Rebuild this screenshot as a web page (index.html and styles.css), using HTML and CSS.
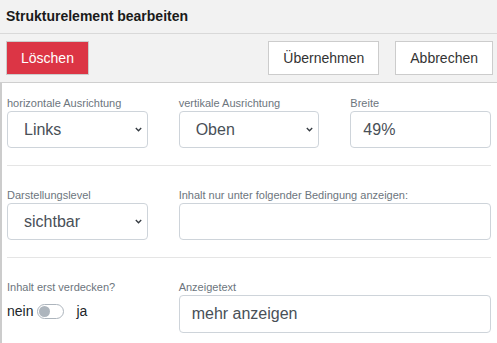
FILE: index.html
```html
<!DOCTYPE html>
<html lang="de">

<head>
    <meta charset="UTF-8">
    <title>Strukturelement bearbeiten</title>
    <link rel="stylesheet" href="styles.css">
</head>

<body>
    <div class="dialog">
        <div class="dialog-title">Strukturelement bearbeiten</div>

        <div class="toolbar">
            <button class="btn btn-danger">Löschen</button>
            <span class="spacer"></span>
            <button class="btn">Übernehmen</button>
            <button class="btn">Abbrechen</button>
        </div>

        <form class="content">
            <div class="row">
                <div class="field">
                    <label for="hAlign">horizontale Ausrichtung</label>
                    <div class="select-wrap">
                        <select id="hAlign" class="control">
                            <option>Links</option>
                            <option>Mitte</option>
                            <option>Rechts</option>
                        </select>
                        <svg class="chevron" width="7" height="5" viewBox="0 0 7 5"><polyline points="0.8,1 3.5,3.8 6.2,1" fill="none" stroke="#343a40" stroke-width="1.3"/></svg>
                    </div>
                </div>
                <div class="field">
                    <label for="vAlign">vertikale Ausrichtung</label>
                    <div class="select-wrap">
                        <select id="vAlign" class="control">
                            <option>Oben</option>
                            <option>Mitte</option>
                            <option>Unten</option>
                        </select>
                        <svg class="chevron" width="7" height="5" viewBox="0 0 7 5"><polyline points="0.8,1 3.5,3.8 6.2,1" fill="none" stroke="#343a40" stroke-width="1.3"/></svg>
                    </div>
                </div>
                <div class="field">
                    <label for="width">Breite</label>
                    <input type="text" id="width" class="control" value="49%">
                </div>
            </div>

            <hr>

            <div class="row">
                <div class="field">
                    <label for="level">Darstellungslevel</label>
                    <div class="select-wrap">
                        <select id="level" class="control">
                            <option>sichtbar</option>
                            <option>versteckt</option>
                        </select>
                        <svg class="chevron" width="7" height="5" viewBox="0 0 7 5"><polyline points="0.8,1 3.5,3.8 6.2,1" fill="none" stroke="#343a40" stroke-width="1.3"/></svg>
                    </div>
                </div>
                <div class="field span-2">
                    <label for="condition">Inhalt nur unter folgender Bedingung anzeigen:</label>
                    <input type="text" id="condition" class="control">
                </div>
            </div>

            <hr>

            <div class="row">
                <div class="field">
                    <label>Inhalt erst verdecken?</label>
                    <div class="switch-line">
                        <span>nein</span>
                        <span class="switch"><span class="knob"></span></span>
                        <span>ja</span>
                    </div>
                </div>
                <div class="field span-2">
                    <label for="moreText">Anzeigetext</label>
                    <input type="text" id="moreText" class="control control-tall" value="mehr anzeigen">
                </div>
            </div>
        </form>
    </div>
</body>

</html>
```

FILE: styles.css
```css
body {
    font-family: "Liberation Sans", Arial, sans-serif;
    margin: 0;
    padding: 0;
    background-color: #fff;
    color: #212529;
}

.dialog {
    width: 497px;
    height: 343px;
    overflow: hidden;
}

.dialog-title {
    height: 33px;
    line-height: 33px;
    padding-left: 6px;
    font-size: 14px;
    font-weight: bold;
    color: #1a1a1a;
    background-color: #f2f2f2;
    border-bottom: 1px solid #d9d9d9;
}

.toolbar {
    display: flex;
    gap: 16px;
    padding: 7px 4px 7px 6px;
    background-color: #f2f2f2;
    border-bottom: 1px solid #cfcfcf;
}

.spacer {
    flex: 1;
}

.btn {
    height: 34px;
    padding: 0 14px;
    font-family: inherit;
    font-size: 14px;
    color: #333;
    background-color: #fff;
    border: 1px solid #ccc;
    border-radius: 0;
}

.btn-danger {
    background-color: #dc3545;
    color: #fff;
}

.content {
    padding: 12px 6px 20px 5px;
    border-left: 2px solid #ccc;
}

.row {
    display: grid;
    grid-template-columns: repeat(3, 1fr);
    column-gap: 31px;
}

.span-2 {
    grid-column: span 2;
}

.field label {
    display: block;
    font-size: 11px;
    line-height: 16px;
    color: #6c757d;
    white-space: nowrap;
}

.control {
    display: block;
    box-sizing: border-box;
    width: 100%;
    height: 37px;
    padding: 6px 12px;
    font-family: inherit;
    font-size: 16px;
    color: #495057;
    background-color: #fff;
    border: 1px solid #ced4da;
    border-radius: 4px;
    outline: none;
}

.control-tall {
    height: 38px;
}

.select-wrap {
    position: relative;
}

.select-wrap select {
    appearance: none;
    -webkit-appearance: none;
    padding-left: 16px;
    padding-right: 28px;
}

.chevron {
    position: absolute;
    right: 6px;
    top: 16px;
    pointer-events: none;
}

hr {
    margin: 17px 0 21px;
    border: 0;
    border-top: 1px solid #e5e5e5;
}

.switch-line {
    display: flex;
    align-items: center;
    margin-top: 6px;
    font-size: 14px;
    line-height: 20px;
    color: #212529;
}

.switch {
    display: inline-block;
    box-sizing: border-box;
    width: 27px;
    height: 15px;
    margin: 0 12px 0 4px;
    padding: 1px;
    border: 1px solid #adb5bd;
    border-radius: 8px;
    background-color: #fff;
}

.knob {
    display: block;
    width: 11px;
    height: 11px;
    border-radius: 50%;
    background-color: #adb5bd;
}
```
